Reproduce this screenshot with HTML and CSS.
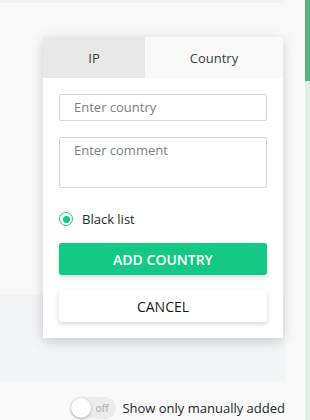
FILE: index.html
```html
<!DOCTYPE html>
<html>
<head>
<meta charset="utf-8">
<link rel="stylesheet" href="styles.css">
</head>
<body>
<div class="page">
  <div class="main">
    <div class="top-card"></div>
    <div class="spacer"></div>
    <div class="band"></div>
    <div class="filter-row">
      <div class="toggle"><span class="knob"></span><span class="off">off</span></div>
      <span class="filter-label">Show only manually added</span>
    </div>
  </div>
  <div class="side"><div class="side-top"></div><div class="side-bottom"></div></div>

  <div class="popup">
    <div class="tabs">
      <div class="tab tab-ip">IP</div>
      <div class="tab tab-country">Country</div>
    </div>
    <div class="popup-body">
      <div class="field">Enter country</div>
      <div class="field area">Enter comment</div>
      <label class="radio-row"><span class="radio"><span class="dot"></span></span><span>Black list</span></label>
      <button class="btn btn-primary">ADD COUNTRY</button>
      <button class="btn btn-cancel">CANCEL</button>
    </div>
  </div>
</div>
</body>
</html>
```
FILE: styles.css
```css
* { box-sizing: border-box; }
html, body { margin: 0; padding: 0; }
body {
  font-family: "Open Sans", "Noto Sans", sans-serif;
  background: #f9f9f9;
  width: 310px;
  height: 420px;
  overflow: hidden;
}
.page {
  position: relative;
  display: flex;
  width: 310px;
  height: 420px;
}
.main {
  width: 305px;
  display: flex;
  flex-direction: column;
}
.top-card {
  width: 283px;
  height: 3px;
  background: #f2f3f5;
  border-bottom-right-radius: 4px;
}
.spacer { height: 291px; }
.band {
  width: 285px;
  height: 87px;
  background: #f3f4f6;
}
.filter-row {
  display: flex;
  align-items: center;
  justify-content: flex-end;
  gap: 6px;
  width: 285px;
  margin-top: 16px;
  height: 22px;
}
.toggle {
  position: relative;
  width: 46px;
  height: 22px;
  border-radius: 11px;
  background: #ececec;
}
.knob {
  position: absolute;
  left: 1px;
  top: 1px;
  width: 20px;
  height: 20px;
  border-radius: 50%;
  background: #fff;
  box-shadow: 0 1px 3px rgba(0,0,0,0.3);
}
.off {
  position: absolute;
  left: 25px;
  top: 3px;
  font-size: 10px;
  font-weight: 600;
  color: #b9b9b9;
  line-height: 16px;
}
.filter-label {
  font-size: 13px;
  color: #23262b;
  line-height: 22px;
}
.side {
  width: 5px;
  display: flex;
  flex-direction: column;
}
.side-top { height: 81px; background: #55b37c; }
.side-bottom { flex: 1; background: #e1efe6; }

.popup {
  position: absolute;
  left: 43px;
  top: 37px;
  width: 240px;
  background: #fff;
  box-shadow: 0 3px 12px rgba(0,0,0,0.18);
}
.tabs {
  display: flex;
  height: 41px;
}
.tab {
  display: flex;
  align-items: center;
  justify-content: center;
  font-size: 13px;
  color: #3a3d42;
}
.tab-ip { width: 102px; background: #e8e8e8; }
.tab-country { flex: 1; background: #f9f9f9; }
.popup-body {
  padding: 16px 16px 16px;
  display: flex;
  flex-direction: column;
}
.field {
  height: 27px;
  border: 1px solid #d6d6d6;
  border-radius: 2px;
  padding: 0 14px;
  font-size: 13px;
  line-height: 25px;
  color: #7b8087;
}
.area {
  margin-top: 16px;
  height: 51px;
  line-height: 20px;
  padding-top: 2px;
}
.radio-row {
  display: flex;
  align-items: center;
  gap: 9px;
  margin-top: 24px;
  height: 14px;
  font-size: 13px;
  color: #24272b;
}
.radio {
  width: 14px;
  height: 14px;
  border-radius: 50%;
  border: 1.5px solid #14c985;
  display: flex;
  align-items: center;
  justify-content: center;
}
.dot {
  width: 7px;
  height: 7px;
  border-radius: 50%;
  background: #14c985;
}
.btn {
  display: block;
  width: 100%;
  height: 32px;
  border: none;
  border-radius: 3px;
  font-family: "Open Sans", "Noto Sans", sans-serif;
  font-size: 14px;
  box-shadow: 0 2px 5px rgba(0,0,0,0.16);
  padding: 0;
}
.btn-primary {
  margin-top: 17px;
  background: #14c985;
  color: #fff;
  font-weight: 600;
}
.btn-cancel {
  margin-top: 15px;
  background: #fff;
  color: #15181c;
}
```
